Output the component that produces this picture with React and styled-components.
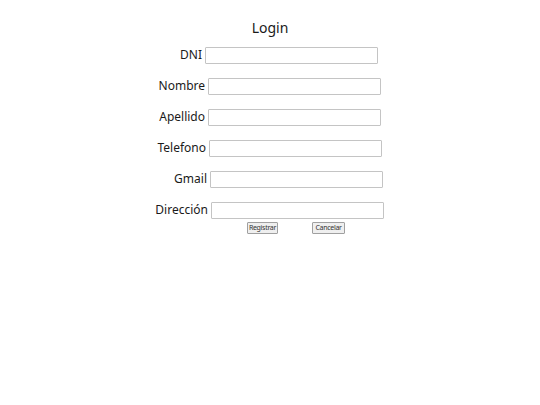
import React from "react";
import styled, { createGlobalStyle } from "styled-components";

const GlobalStyle = createGlobalStyle`
  body {
    margin: 0;
    background: #ffffff;
    font-family: "Noto Sans", "Open Sans", sans-serif;
    color: #1a1a1a;
  }
`;

const Page = styled.div`
  width: 540px;
  padding-top: 18px;
  display: flex;
  flex-direction: column;
`;

const Title = styled.h1`
  margin: 0 0 9px 0;
  font-size: 14px;
  font-weight: 400;
  line-height: 20px;
  text-align: center;
`;

const Row = styled.div`
  display: flex;
  align-items: center;
  height: 17px;
  margin-bottom: 14px;
  padding-left: ${(props) => props.$shift}px;

  &:last-of-type {
    margin-bottom: 3px;
  }
`;

const Label = styled.label`
  width: 202px;
  margin-right: 3px;
  padding-bottom: 2px;
  text-align: right;
  font-size: 12px;
  line-height: 15px;
  white-space: nowrap;
`;

const Field = styled.input`
  box-sizing: border-box;
  width: 173px;
  height: 17px;
  margin: 0;
  padding: 0 2px;
  border: 1px solid #c4c4c4;
  border-radius: 1px;
  background: #ffffff;
  font-family: "Noto Sans", sans-serif;
  font-size: 11px;
`;

const ButtonRow = styled.div`
  display: flex;
  gap: 34px;
  padding-left: 247px;
`;

const SmallButton = styled.button`
  box-sizing: border-box;
  width: ${(props) => props.$width}px;
  height: 12px;
  margin: 0;
  padding: 0;
  border: 1px solid #a0a0a0;
  border-radius: 1px;
  background: #efefef;
  color: #333333;
  font-family: "Noto Sans", sans-serif;
  font-size: 7px;
  letter-spacing: -0.3px;
  line-height: 10px;
`;

const fields = [
  { label: "DNI", shift: 0 },
  { label: "Nombre", shift: 3 },
  { label: "Apellido", shift: 3 },
  { label: "Telefono", shift: 4 },
  { label: "Gmail", shift: 5 },
  { label: "Dirección", shift: 6 },
];

export default function App() {
  return (
    <Page>
      <GlobalStyle />
      <Title>Login</Title>
      <div>
        {fields.map((f) => (
          <Row key={f.label} $shift={f.shift}>
            <Label>{f.label}</Label>
            <Field type="text" />
          </Row>
        ))}
      </div>
      <ButtonRow>
        <SmallButton $width={31}>Registrar</SmallButton>
        <SmallButton $width={33}>Cancelar</SmallButton>
      </ButtonRow>
    </Page>
  );
}
